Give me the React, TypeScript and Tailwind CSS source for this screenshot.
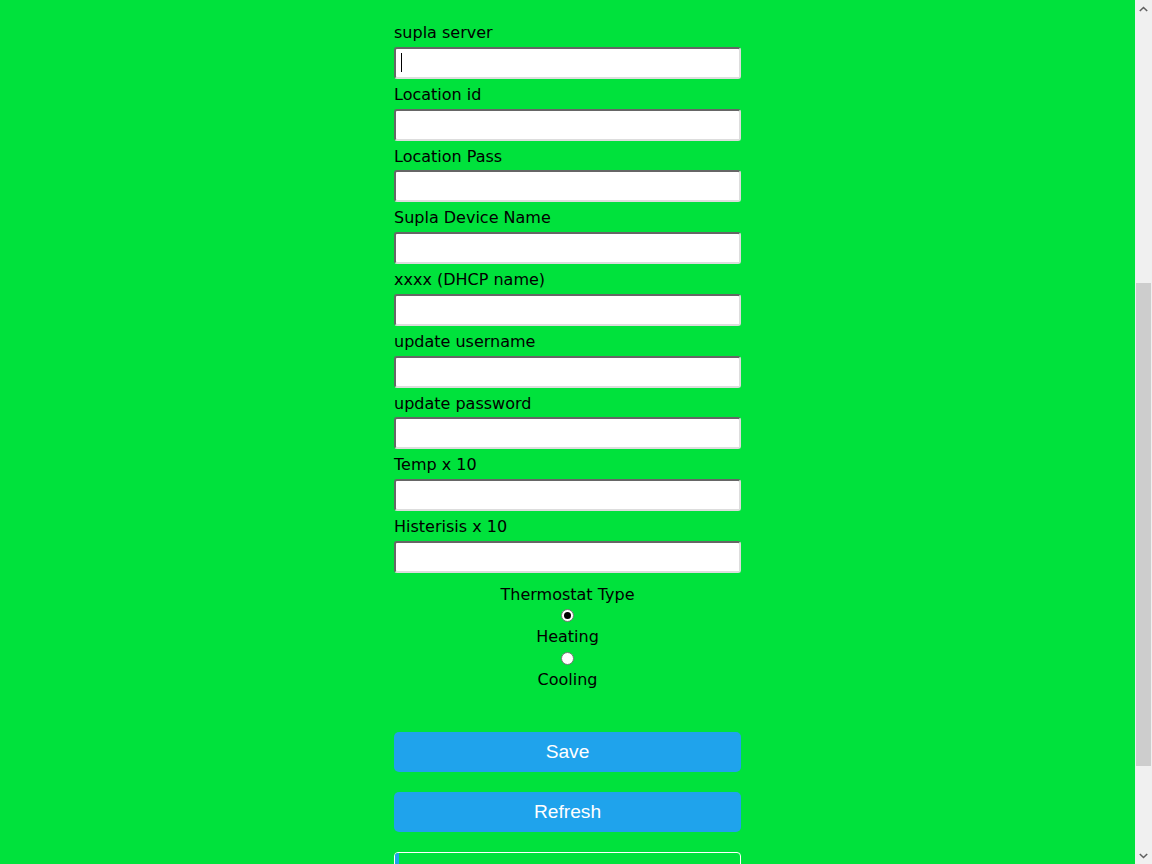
import React from 'react';

const fields = [
  'supla server',
  'Location id',
  'Location Pass',
  'Supla Device Name',
  'xxxx (DHCP name)',
  'update username',
  'update password',
  'Temp x 10',
  'Histerisis x 10',
];

const Radio: React.FC<{ checked?: boolean }> = ({ checked }) => (
  <div className="h-[21px] flex items-center justify-center">
    <span className="w-[13px] h-[13px] rounded-full bg-white border border-[#767676] flex items-center justify-center">
      {checked && <span className="w-[7px] h-[7px] rounded-full bg-black" />}
    </span>
  </div>
);

const App: React.FC = () => {
  return (
    <div className="flex h-[864px] overflow-hidden" style={{ fontFamily: '"DejaVu Sans", Verdana, sans-serif' }}>
      {/* page */}
      <div className="flex-1 bg-[#00e23c] text-black text-[16px]">
        <div className="w-[347px] mx-auto pt-[22px]">
          {fields.map((label, i) => (
            <div key={label} className="mb-[5px]">
              <div className="h-[19.75px] leading-[21.5px] mb-[5px] whitespace-nowrap">{label}</div>
              <div className="relative">
                <input
                  type="text"
                  className="w-full h-[32px] bg-white rounded-[3px] border-2 border-t-[#666666] border-l-[#666666] border-b-[#dddddd] border-r-[#dddddd] px-[5px] outline-none"
                />
                {i === 0 && <span className="absolute left-[7px] top-[6px] w-px h-[19px] bg-black" />}
              </div>
            </div>
          ))}

          {/* thermostat */}
          <div className="text-center pt-[7px]">
            <div className="h-[20px] leading-[20px]">Thermostat Type</div>
            <Radio checked />
            <div className="h-[22px] leading-[22px]">Heating</div>
            <Radio />
            <div className="h-[22px] leading-[22px]">Cooling</div>
          </div>

          <div className="pt-[41px] flex flex-col gap-5" style={{ fontFamily: '"Liberation Sans", Arial, sans-serif' }}>
            <button className="w-full h-[40px] pt-[2px] rounded-[5px] bg-[#1fa3ec] text-white text-[19.2px]">Save</button>
            <button className="w-full h-[40px] pt-[2px] rounded-[5px] bg-[#1fa3ec] text-white text-[19.2px]">Refresh</button>
            <div className="w-full h-[20px] rounded-t-[4px] border border-white flex overflow-hidden">
              <div className="w-[4px] h-full bg-[#1fa3ec]" />
            </div>
          </div>
        </div>
      </div>

      {/* scrollbar */}
      <div className="w-[17px] bg-[#f0f0f0] flex flex-col">
        <div className="h-[17px] flex items-center justify-center">
          <svg width="9" height="6" viewBox="0 0 9 6">
            <path d="M0.8 5 L4.5 1.5 L8.2 5" fill="none" stroke="#606060" strokeWidth="1.6" />
          </svg>
        </div>
        <div className="h-[266px]" />
        <div className="h-[483px] mx-[1px] bg-[#cdcdcd]" />
        <div className="flex-1" />
        <div className="h-[17px] flex items-center justify-center">
          <svg width="9" height="6" viewBox="0 0 9 6">
            <path d="M0.8 1 L4.5 4.5 L8.2 1" fill="none" stroke="#606060" strokeWidth="1.6" />
          </svg>
        </div>
      </div>
    </div>
  );
};

export default App;
